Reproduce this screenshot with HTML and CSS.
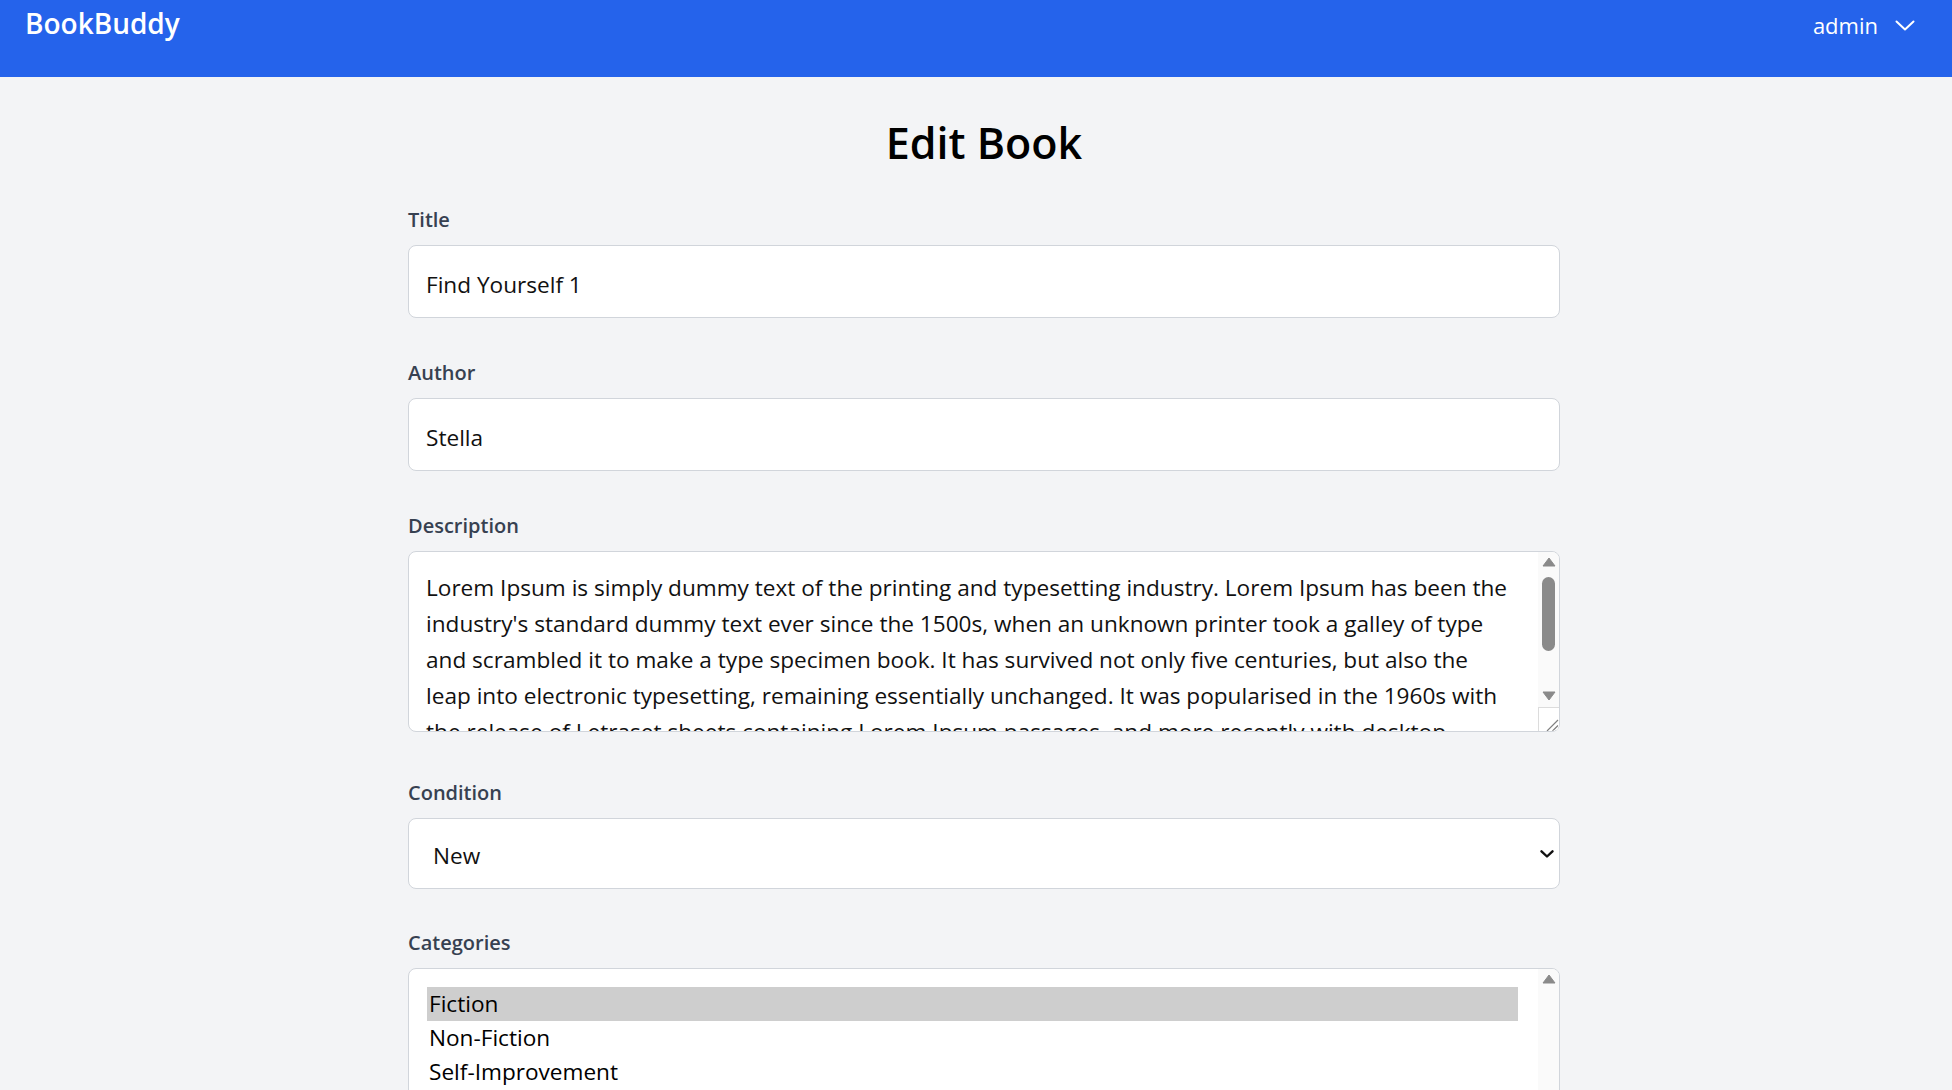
FILE: index.html
```html
<!DOCTYPE html>
<html lang="en">
<head>
<meta charset="utf-8">
<title>Edit Book - BookBuddy</title>
<link rel="stylesheet" href="styles.css">
</head>
<body>
<header class="topbar">
  <a class="brand" href="#">BookBuddy</a>
  <button class="user-menu" type="button">
    <span class="user-name">admin</span>
    <svg class="user-chevron" width="20" height="11" viewBox="0 0 20 11" aria-hidden="true"><polyline points="1.5,1.5 10,9.5 18.5,1.5" fill="none" stroke="#ffffff" stroke-width="2" stroke-linecap="round" stroke-linejoin="round"/></svg>
  </button>
</header>
<main class="page">
  <form class="book-form">
    <h1 class="page-title">Edit Book</h1>

    <div class="field">
      <label class="field-label" for="title">Title</label>
      <input class="field-input" id="title" type="text" value="Find Yourself 1">
    </div>

    <div class="field">
      <label class="field-label" for="author">Author</label>
      <input class="field-input" id="author" type="text" value="Stella">
    </div>

    <div class="field field-desc">
      <label class="field-label" for="description">Description</label>
      <div class="control-wrap">
        <textarea class="field-textarea" id="description">Lorem Ipsum is simply dummy text of the printing and typesetting industry. Lorem Ipsum has been the industry's standard dummy text ever since the 1500s, when an unknown printer took a galley of type and scrambled it to make a type specimen book. It has survived not only five centuries, but also the leap into electronic typesetting, remaining essentially unchanged. It was popularised in the 1960s with the release of Letraset sheets containing Lorem Ipsum passages, and more recently with desktop publishing software like Aldus PageMaker including versions of Lorem Ipsum.</textarea>
        <div class="vscroll" aria-hidden="true">
          <span class="vscroll-btn vscroll-up"><svg width="14" height="10" viewBox="0 0 14 10"><path d="M7 1 L13 9 H1 Z" fill="#8a8a8a" stroke="#8a8a8a" stroke-width="1" stroke-linejoin="round"/></svg></span>
          <span class="vscroll-thumb"></span>
          <span class="vscroll-fill"></span>
          <span class="vscroll-btn vscroll-down"><svg width="14" height="10" viewBox="0 0 14 10"><path d="M1 1 H13 L7 9 Z" fill="#8a8a8a" stroke="#8a8a8a" stroke-width="1" stroke-linejoin="round"/></svg></span>
          <span class="vscroll-grip"><svg width="20" height="23" viewBox="0 0 20 23"><path d="M19 12 L8 23 M19 17.5 L13.5 23" stroke="#808080" stroke-width="1.2" fill="none"/></svg></span>
        </div>
      </div>
    </div>

    <div class="field field-cond">
      <label class="field-label" for="condition">Condition</label>
      <div class="control-wrap">
        <select class="field-select" id="condition">
          <option selected>New</option>
          <option>Like New</option>
          <option>Good</option>
          <option>Fair</option>
          <option>Poor</option>
        </select>
        <svg class="select-chevron" width="14" height="9" viewBox="0 0 14 9" aria-hidden="true"><polyline points="1.5,1.8 7,7 12.5,1.8" fill="none" stroke="#111111" stroke-width="2.4" stroke-linecap="round" stroke-linejoin="round"/></svg>
      </div>
    </div>

    <div class="field">
      <label class="field-label" for="categories">Categories</label>
      <div class="control-wrap">
        <select class="field-list" id="categories" multiple>
          <option selected>Fiction</option>
          <option>Non-Fiction</option>
          <option>Self-Improvement</option>
          <option>Science</option>
          <option>History</option>
          <option>Biography</option>
          <option>Fantasy</option>
          <option>Mystery</option>
          <option>Romance</option>
        </select>
        <div class="vscroll" aria-hidden="true">
          <span class="vscroll-btn vscroll-up"><svg width="14" height="10" viewBox="0 0 14 10"><path d="M7 1 L13 9 H1 Z" fill="#8a8a8a" stroke="#8a8a8a" stroke-width="1" stroke-linejoin="round"/></svg></span>
          <span class="vscroll-fill"></span>
          <span class="vscroll-btn vscroll-down"><svg width="14" height="10" viewBox="0 0 14 10"><path d="M1 1 H13 L7 9 Z" fill="#8a8a8a" stroke="#8a8a8a" stroke-width="1" stroke-linejoin="round"/></svg></span>
        </div>
      </div>
    </div>
  </form>
</main>
</body>
</html>
```

FILE: styles.css
```css
* {
  box-sizing: border-box;
}

html,
body {
  margin: 0;
  padding: 0;
}

body {
  font-family: "Open Sans", "Noto Sans", "DejaVu Sans", sans-serif;
  background: #f3f4f6;
  color: #111111;
  overflow: hidden;
}

/* ---------- top bar ---------- */
.topbar {
  height: 77px;
  background: #2563eb;
  display: flex;
  justify-content: space-between;
  align-items: flex-start;
  padding: 0 37px 0 25px;
}

.brand {
  margin-top: 4px;
  font-size: 28px;
  line-height: 38px;
  font-weight: 600;
  color: #ffffff;
  text-decoration: none;
}

.user-menu {
  margin-top: 10px;
  display: flex;
  align-items: center;
  gap: 17px;
  padding: 0;
  border: 0;
  background: none;
  color: #ffffff;
  font-family: inherit;
  font-size: 22px;
  line-height: 30px;
  cursor: pointer;
}

.user-chevron {
  display: block;
}

/* ---------- page ---------- */
.page {
  padding: 41px 0 0 16px;
}

.book-form {
  max-width: 1152px;
  margin: 0 auto;
}

.page-title {
  margin: 0 0 37px;
  font-size: 43px;
  line-height: 50px;
  font-weight: 600;
  text-align: center;
  color: #000000;
}

.field {
  margin-bottom: 40px;
}

.field-desc {
  margin-bottom: 46px;
}

.field-cond {
  margin-bottom: 39px;
}

.field-label {
  display: block;
  margin-bottom: 10px;
  font-size: 20px;
  line-height: 30px;
  font-weight: 600;
  color: #374151;
}

.control-wrap {
  position: relative;
}

.field-input {
  display: block;
  width: 100%;
  height: 73px;
  padding: 5px 17px 0;
  border: 1px solid #d1d5db;
  border-radius: 8px;
  background: #ffffff;
  font-family: inherit;
  font-size: 22.6px;
  color: #111111;
  outline: none;
}

.field-textarea {
  display: block;
  width: 100%;
  height: 181px;
  margin: 0;
  padding: 18px 43px 16px 17px;
  border: 1px solid #d1d5db;
  border-radius: 8px;
  background: #ffffff;
  font-family: inherit;
  font-size: 22.6px;
  line-height: 36px;
  color: #111111;
  resize: vertical;
  overflow: hidden;
  outline: none;
}

.field-select {
  display: block;
  width: 100%;
  height: 71px;
  padding: 4px 44px 0 24px;
  border: 1px solid #d1d5db;
  border-radius: 8px;
  background: #ffffff;
  font-family: inherit;
  font-size: 22.6px;
  color: #111111;
  -webkit-appearance: none;
  appearance: none;
  outline: none;
}

.select-chevron {
  position: absolute;
  right: 6px;
  top: 50%;
  transform: translateY(-50%);
  pointer-events: none;
}

.field-list {
  display: block;
  width: 100%;
  height: 260px;
  padding: 18px 41px 0 18px;
  border: 1px solid #d1d5db;
  border-radius: 8px;
  background: #ffffff;
  font-family: inherit;
  font-size: 22.6px;
  color: #000000;
  overflow: hidden;
  outline: none;
}

.field-list option {
  padding: 1.4px 2px 1.4px;
  color: #000000;
}

.field-list option:checked {
  background: linear-gradient(#cecece, #cecece);
  color: #000000;
}

/* ---------- classic vertical scrollbar (drawn over the control) ---------- */
.vscroll {
  position: absolute;
  top: 1px;
  right: 1px;
  bottom: 1px;
  width: 21px;
  display: flex;
  flex-direction: column;
  background: #fafafa;
  border-radius: 0 7px 7px 0;
  overflow: hidden;
  pointer-events: none;
}

.vscroll-btn {
  display: flex;
  justify-content: center;
  flex: none;
  height: 21px;
}

.vscroll-btn svg {
  display: block;
}

.vscroll-up {
  padding-top: 5px;
}

.vscroll-down {
  padding-top: 5px;
}

.vscroll-thumb {
  flex: none;
  height: 74px;
  margin: 4px 4px 0;
  border-radius: 7px;
  background: #8a8a8a;
}

.vscroll-fill {
  flex: 1;
}

.vscroll-grip {
  flex: none;
  height: 24px;
  border-top: 1px solid #dcdcdc;
  border-left: 1px solid #dcdcdc;
  background: #ffffff;
}

.vscroll-grip svg {
  display: block;
}
```
